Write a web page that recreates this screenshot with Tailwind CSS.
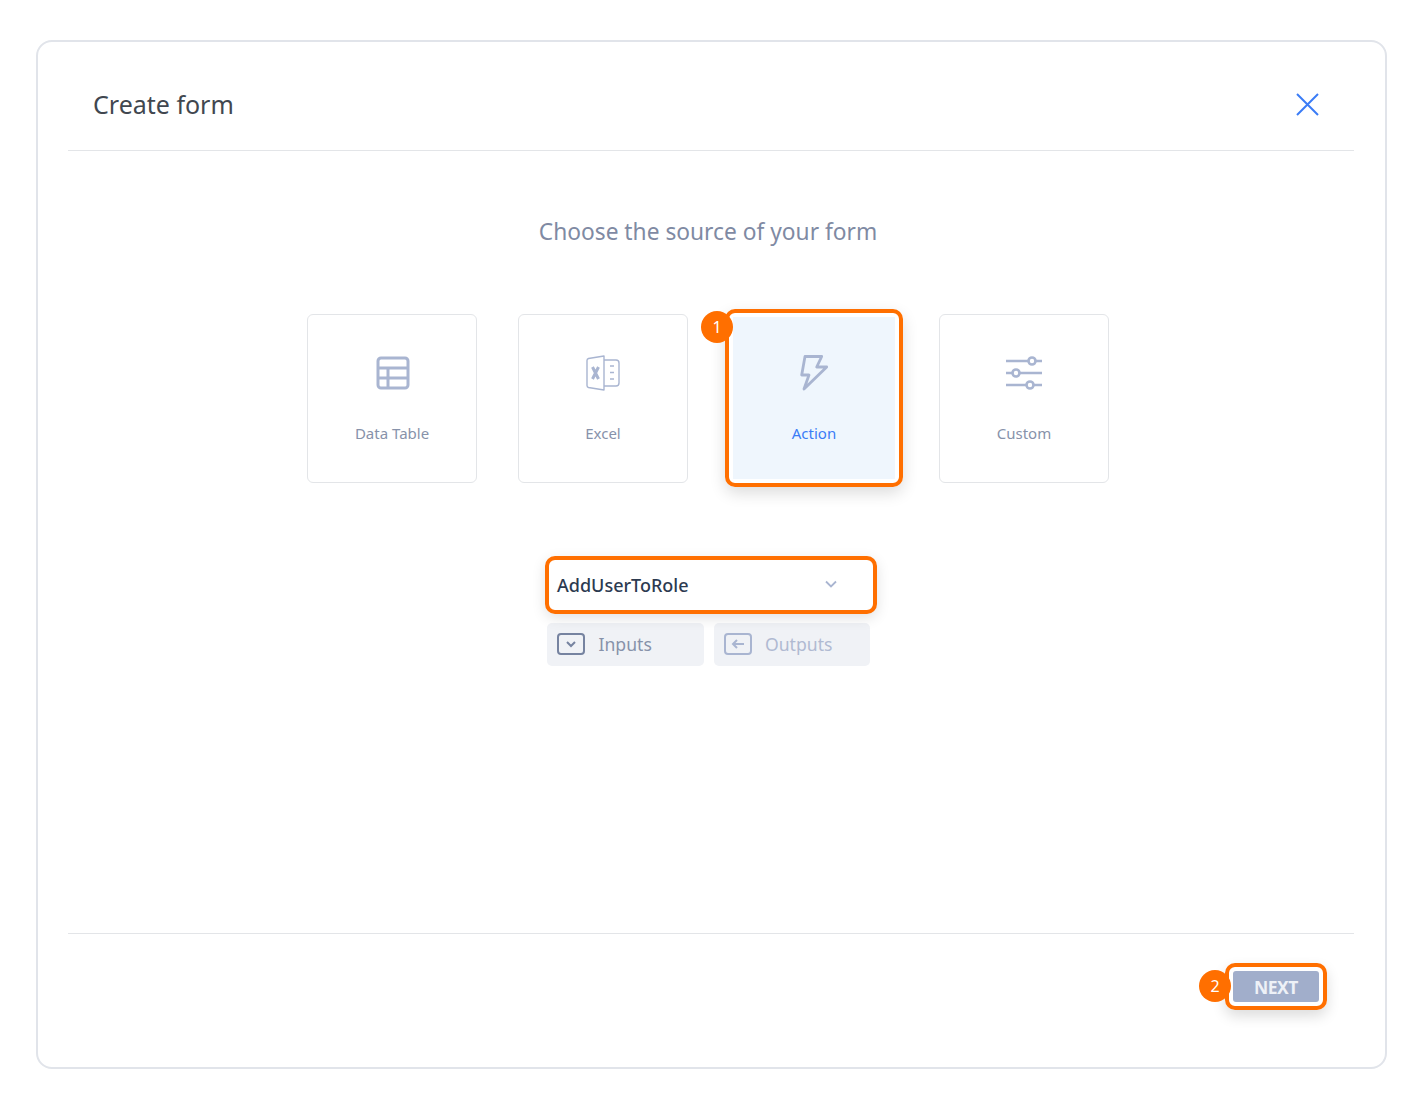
<!DOCTYPE html>
<html lang="en">
<head>
    <meta charset="UTF-8">
    <meta name="viewport" content="width=device-width, initial-scale=1.0">
    <title>Create form</title>
    <script src="https://cdn.jsdelivr.net/npm/@tailwindcss/browser@4"></script>
</head>
<body class="bg-white font-['Noto_Sans',sans-serif]">
    <div class="w-[1422px] h-[1109px] pt-[40px] pl-[36px]">
        <div class="w-[1351px] h-[1029px] border-2 border-[#e1e4ea] rounded-[16px] pl-[30px] pr-[31px] flex flex-col">
            <!-- header -->
            <div class="h-[109px] shrink-0 border-b border-[#e3e5e8] flex items-center justify-between pl-[25px] pr-[34px] pt-[16px]">
                <h1 class="text-[25px] leading-[32px] text-[#41474f]">Create form</h1>
                <svg class="w-[26px] h-[26px] text-[#3b7cf6]" viewBox="0 0 26 26" fill="none" stroke="currentColor" stroke-width="2"><path d="M3 3l21 21M24 3L3 24"/></svg>
            </div>

            <!-- body -->
            <div class="flex-1 flex flex-col items-center pt-[65px]">
                <p class="text-[22.75px] leading-[32px] text-[#7f8aa3] ml-[-6px]">Choose the source of your form</p>

                <div class="flex mt-[66px] ml-[-6px]">
                    <div class="w-[170px] h-[169px] mr-[41px] border border-[#e3e5e8] rounded-[6px] flex flex-col items-center pt-[40px]">
                        <svg class="w-[36px] h-[36px] ml-[2px] text-[#a9b5d1]" viewBox="0 0 36 36" fill="none" stroke="currentColor" stroke-width="3"><rect x="3" y="3" width="30" height="30" rx="3"/><path d="M3 13h30M3 23h30M13 13v20"/></svg>
                        <span class="mt-[32px] text-[15px] leading-[20px] text-[#8792aa]">Data Table</span>
                    </div>
                    <div class="w-[170px] h-[169px] mr-[41px] border border-[#e3e5e8] rounded-[6px] flex flex-col items-center pt-[40px]">
                        <svg class="w-[36px] h-[36px] text-[#a9b5d1]" viewBox="0 0 36 36" fill="none" stroke="currentColor" stroke-width="1.4"><path d="M19 1L3.500 3.500Q2 4 2 5.500v25Q2 32 3.500 32.500L19 35z" stroke-linejoin="round"/><path d="M19 5h12q3 0 3 3v20q0 3-3 3H19"/><path d="M25 11h4M25 17.500h4M25 24h4" /><path d="M7.500 12l6 12M13.500 12l-6 12" stroke-width="3"/></svg>
                        <span class="mt-[32px] text-[15px] leading-[20px] text-[#8792aa]">Excel</span>
                    </div>
                    <div class="relative w-[170px] h-[169px] mr-[40px] bg-[#eff6fd] border-[4px] border-t-[3px] border-white flex flex-col items-center pt-[38px]">
                        <svg class="w-[36px] h-[36px] text-[#a9b5d1]" viewBox="0 0 36 36" fill="none" stroke="currentColor" stroke-width="2.800" stroke-linejoin="round" stroke-linecap="round"><path d="M9 1.500h16.700L20.700 12h10L8 34l5-14H5.700z"/></svg>
                        <span class="mt-[32px] text-[15px] leading-[20px] text-[#3b7cf6]">Action</span>
                        <div class="absolute top-[-8px] bottom-[-8px] left-[-8px] right-[-8px] border-[4px] border-[#ff6f00] rounded-[10px] shadow-[0_6px_16px_rgba(0,0,0,0.14)]"></div>
                        <div class="absolute left-[-32px] top-[-6px] w-[32px] h-[32px] rounded-full bg-[#ff6f00] text-white text-[16px] leading-[32px] text-center">1</div>
                    </div>
                    <div class="w-[170px] h-[169px] border border-[#e3e5e8] rounded-[6px] flex flex-col items-center pt-[40px]">
                        <svg class="w-[36px] h-[36px] text-[#a9b5d1]" viewBox="0 0 36 36" fill="none" stroke="currentColor" stroke-width="2.600"><path d="M0 6h22M30 6h6M0 18h6M14 18h22M0 30h20M28 30h8"/><circle cx="26" cy="6" r="3.500"/><circle cx="10" cy="18" r="3.500"/><circle cx="24" cy="30" r="3.500"/></svg>
                        <span class="mt-[32px] text-[15px] leading-[20px] text-[#8792aa]">Custom</span>
                    </div>
                </div>

                <div class="relative w-[332px] h-[58px] mt-[73px] border-[4px] border-[#ff6f00] rounded-[10px] shadow-[0_4px_14px_rgba(0,0,0,0.12)] flex items-center justify-between pl-[8px] pr-[36px] bg-white">
                    <span class="text-[18px] font-medium text-[#2c3a50] mt-[1px]">AddUserToRole</span>
                    <svg class="w-[12px] h-[8px] text-[#a9b5d1] mt-[-3px]" viewBox="0 0 12 8" fill="none" stroke="currentColor" stroke-width="1.800"><path d="M1 1.500l5 5 5-5"/></svg>
                </div>

                <div class="flex gap-[10px] mt-[9px] ml-[-5px]">
                    <div class="w-[156.5px] h-[43px] bg-[#f0f2f6] rounded-[5px] flex items-center pl-[10px] gap-[13.5px]">
                        <svg class="w-[28px] h-[22px] mt-[-1px] text-[#7683a0]" viewBox="0 0 28 22" fill="none" stroke="currentColor" stroke-width="2"><rect x="1" y="1" width="26" height="20" rx="3"/><path d="M10 9l4 4 4-4"/></svg>
                        <span class="text-[17.6px] text-[#8792aa]">Inputs</span>
                    </div>
                    <div class="w-[156.5px] h-[43px] bg-[#f0f2f6] rounded-[5px] flex items-center pl-[10px] gap-[13.5px]">
                        <svg class="w-[28px] h-[22px] mt-[-1px] text-[#a9b5d1]" viewBox="0 0 28 22" fill="none" stroke="currentColor" stroke-width="2"><rect x="1" y="1" width="26" height="20" rx="3"/><path d="M20 11H9M13 7l-4 4 4 4"/></svg>
                        <span class="text-[17.6px] text-[#b0bad2]">Outputs</span>
                    </div>
                </div>
            </div>

            <!-- footer -->
            <div class="h-[134px] shrink-0 border-t border-[#e3e5e8] flex justify-end pr-[35px] pt-[37px]">
                <div class="relative w-[86px] h-[31px] bg-[#a1aecb] rounded-[3px] flex items-center justify-center">
                    <span class="text-[17.5px] font-bold text-[#eef1f7] tracking-[-0.5px] mt-[2px]">NEXT</span>
                    <div class="absolute inset-[-8px] border-[4px] border-[#ff6f00] rounded-[10px] shadow-[0_6px_14px_rgba(0,0,0,0.14)]"></div>
                    <div class="absolute left-[-34px] top-[-1px] w-[32px] h-[32px] rounded-full bg-[#ff6f00] text-white text-[16px] leading-[32px] text-center">2</div>
                </div>
            </div>
        </div>
    </div>
</body>
</html>
